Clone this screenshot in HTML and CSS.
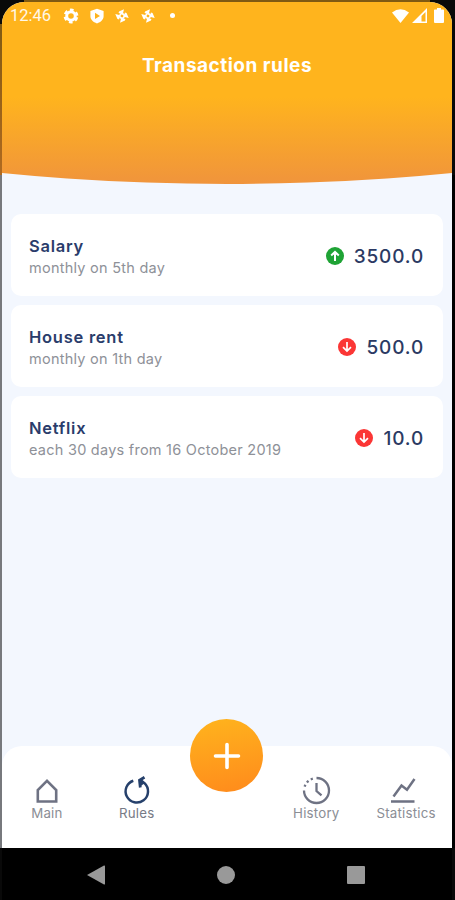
FILE: index.html
```html
<!DOCTYPE html>
<html lang="en">
<head>
    <meta charset="UTF-8">
    <meta name="viewport" content="width=device-width, initial-scale=1.0">
    <title>Transaction rules</title>
    <link rel="stylesheet" href="styles.css">
</head>
<body>
    <div class="phone">
        <div class="screen">
            <!-- Header -->
            <header class="header">
                <div class="status-bar">
                    <span class="time">12:46</span>
                    <div class="status-left">
                        <svg width="16" height="16" viewBox="0 0 16 16"><circle cx="8" cy="8" r="4.3" fill="none" stroke="#fff" stroke-width="3"/><circle cx="8" cy="8" r="6.2" fill="none" stroke="#fff" stroke-width="2.4" stroke-dasharray="3.7 2.793" stroke-dashoffset="-1.4"/></svg>
                        <svg width="16" height="16" viewBox="0 0 16 16"><path fill="#fff" fill-rule="evenodd" d="M8 .8 14.6 3v5.2c0 3.2-2.6 5.8-6.6 7.2C4 14 1.4 11.4 1.4 8.2V3zM6 4.8V11l5-3.1z"/></svg>
                        <svg width="16" height="16" viewBox="0 0 16 16"><g transform="rotate(14 8 8)"><path fill="#fff" d="M8.300 1v5H4V4.300zM15 8.300h-5V4h1.700zM7.700 15v-5H12v1.700zM1 7.700h5V12H4.300z"/><circle cx="8" cy="8" r="2.200" fill="none" stroke="#fff" stroke-width="1.600"/></g></svg>
                        <svg width="16" height="16" viewBox="0 0 16 16"><g transform="rotate(14 8 8)"><path fill="#fff" d="M8.300 1v5H4V4.300zM15 8.300h-5V4h1.700zM7.700 15v-5H12v1.700zM1 7.700h5V12H4.300z"/><circle cx="8" cy="8" r="2.200" fill="none" stroke="#fff" stroke-width="1.600"/></g></svg>
                        <span class="dot"></span>
                    </div>
                    <div class="status-right">
                        <svg width="17" height="14" viewBox="0 0 17 14"><path fill="#fff" d="M0 3.500Q8.500-3 17 3.500L8.500 14z"/></svg>
                        <svg width="15" height="15" viewBox="0 0 15 15"><path fill="#fff" fill-rule="evenodd" d="M0 15 15 0v15zM9.500 8v5.500h4V4z"/></svg>
                        <svg width="10" height="15" viewBox="0 0 10 15"><path fill="#fff" d="M3 0h4v1.500h2.200q.8 0 .8.800v11.700q0 1-1 1H1q-1 0-1-1V2.300q0-.8.800-.8H3z"/></svg>
                    </div>
                </div>
                <h1 class="title">Transaction rules</h1>
            </header>

            <!-- Rules -->
            <main class="rules">
                <div class="rule">
                    <div class="rule-info">
                        <h2 class="rule-name">Salary</h2>
                        <p class="rule-period">monthly on 5th day</p>
                    </div>
                    <svg class="arrow" width="18" height="18" viewBox="0 0 18 18"><circle cx="9" cy="9" r="9" fill="#1fa335"/><path d="M9 14V5.500M5.200 8.500 9 4.900l3.800 3.600" fill="none" stroke="#fff" stroke-width="2"/></svg>
                    <span class="amount">3500.0</span>
                </div>
                <div class="rule">
                    <div class="rule-info">
                        <h2 class="rule-name">House rent</h2>
                        <p class="rule-period">monthly on 1th day</p>
                    </div>
                    <svg class="arrow" width="18" height="18" viewBox="0 0 18 18"><circle cx="9" cy="9" r="9" fill="#fb3635"/><path d="M9 4v9M5 9.200l4 3.800 4-3.800" fill="none" stroke="#fff" stroke-width="1.700"/></svg>
                    <span class="amount">500.0</span>
                </div>
                <div class="rule">
                    <div class="rule-info">
                        <h2 class="rule-name">Netflix</h2>
                        <p class="rule-period">each 30 days from 16 October 2019</p>
                    </div>
                    <svg class="arrow" width="18" height="18" viewBox="0 0 18 18"><circle cx="9" cy="9" r="9" fill="#fb3635"/><path d="M9 4v9M5 9.200l4 3.800 4-3.800" fill="none" stroke="#fff" stroke-width="1.700"/></svg>
                    <span class="amount">10.0</span>
                </div>
            </main>

            <!-- Tabs -->
            <nav class="tabs">
                <a class="tab">
                    <svg width="28" height="28" viewBox="0 0 28 28"><path d="M4.800 25.500V14L14 4.800 23.200 14v11.500z" fill="none" stroke="#6e7283" stroke-width="2.600"/></svg>
                    <span>Main</span>
                </a>
                <a class="tab active">
                    <svg width="28" height="28" viewBox="0 0 28 28"><path d="M10.300 4.700A11.200 11.200 0 1 0 21.500 7.200L17.500 4" fill="none" stroke="#26406b" stroke-width="2.500"/><path d="M21.500 1.200 16.500 4.200l.8 7.300" fill="none" stroke="#26406b" stroke-width="2.800"/><path fill="#26406b" d="m16 3.500 5.500 3.800-4 3z"/></svg>
                    <span>Rules</span>
                </a>
                <span class="tab"></span>
                <a class="tab">
                    <svg width="28" height="28" viewBox="0 0 28 28"><path d="M14.500 2a12.500 12.500 0 1 1-12.500 12.500" fill="none" stroke="#6e7283" stroke-width="2.300"/><path d="M2.600 10.700A12.500 12.500 0 0 1 13 2.100" fill="none" stroke="#6e7283" stroke-width="2.300" stroke-dasharray="2.200 2.600"/><path d="M14.500 7v8l5 4.300" fill="none" stroke="#6e7283" stroke-width="2.300"/></svg>
                    <span>History</span>
                </a>
                <a class="tab">
                    <svg width="28" height="28" viewBox="0 0 28 28"><path d="M1.500 20.500 9.500 9.500l5.500 4.300L22.500 3M-1 25.500h23.500" fill="none" stroke="#6e7283" stroke-width="2.500" overflow="visible"/></svg>
                    <span>Statistics</span>
                </a>
                <button class="add-btn" aria-label="Add">
                    <svg width="28" height="28" viewBox="0 0 28 28"><path d="M14 2.500v23M2.500 14h23" stroke="#fff" stroke-width="3.600" stroke-linecap="round"/></svg>
                </button>
            </nav>
        </div>

        <!-- System buttons -->
        <div class="system-bar">
            <svg width="18" height="20" viewBox="0 0 18 20"><path fill="#999" d="M0 10 17 .5q1-.3 1 .8v17.400q0 1.100-1 .8z"/></svg>
            <svg width="18" height="18" viewBox="0 0 18 18"><circle cx="9" cy="9" r="9" fill="#999"/></svg>
            <svg width="18" height="18" viewBox="0 0 18 18"><rect width="18" height="18" rx="1" fill="#999"/></svg>
        </div>
    </div>
</body>
</html>
```
FILE: styles.css
```css
* {
    box-sizing: border-box;
    margin: 0;
    padding: 0;
}

body {
    background-color: #090909;
    font-family: Inter, sans-serif;
}

svg {
    display: block;
    flex-shrink: 0;
    overflow: visible;
}

.phone {
    width: 455px;
    height: 900px;
    padding: 2px 3px 0 2px;
    display: flex;
    flex-direction: column;
    overflow: hidden;
    background: linear-gradient(to right, #77797d 0, #77797d 2px, #000 2px) 0 175px / 100% 673px no-repeat,
        linear-gradient(#805a12, #805a12) 24px 0 / 406px 2px no-repeat,
        linear-gradient(#805a12, #b06a20) 0 24px / 2px 151px no-repeat;
}

.screen {
    height: 846px;
    display: flex;
    flex-direction: column;
    border-radius: 22px 22px 0 0;
    overflow: hidden;
    background-color: #f3f7fe;
}

/* Header */
.header {
    height: 182px;
    flex-shrink: 0;
    background: linear-gradient(#ffb41d 0, #ffb41d 52%, #f0943c 100%);
    clip-path: ellipse(820px 286px at 50% -104px);
}

.status-bar {
    height: 27px;
    padding: 0 8px;
    display: flex;
    align-items: center;
    color: #fff;
}

.time {
    width: 53px;
    font-family: Roboto, sans-serif;
    font-size: 16.5px;
    opacity: 0.9;
}

.status-left {
    display: flex;
    align-items: center;
    gap: 9.5px;
}

.dot {
    width: 5px;
    height: 5px;
    margin-left: 5px;
    border-radius: 50%;
    background-color: #fff;
}

.status-right {
    margin-left: auto;
    display: flex;
    align-items: center;
    gap: 3px;
}

.status-right svg:last-child {
    margin-left: 4px;
}

.title {
    margin-top: 25px;
    text-align: center;
    color: #fff;
    font-size: 19px;
    line-height: 24px;
    font-weight: 700;
    letter-spacing: 0.5px;
}

/* Rules */
.rules {
    flex: 1;
    padding: 30px 9px 0;
    display: flex;
    flex-direction: column;
    gap: 9px;
}

.rule {
    height: 82px;
    padding: 0 18px;
    display: flex;
    align-items: center;
    border-radius: 10px;
    background-color: #fff;
}

.rule-info {
    flex: 1;
    padding-top: 3px;
}

.rule-name {
    color: #2a3c6b;
    font-size: 16.5px;
    line-height: 22px;
    font-weight: 600;
    letter-spacing: 0.75px;
}

.rule-period {
    color: #8e9198;
    font-size: 14.5px;
    line-height: 22px;
    letter-spacing: 0.25px;
}

.arrow {
    margin-top: 1px;
}

.amount {
    margin: 4px 1px 0 10px;
    color: #2b3a63;
    font-size: 19px;
    line-height: 24px;
    font-weight: 500;
    letter-spacing: 0.85px;
}

/* Tabs */
.tabs {
    position: relative;
    height: 102px;
    padding-right: 1px;
    display: flex;
    border-radius: 20px 20px 0 0;
    background-color: #fff;
}

.tab {
    flex: 1;
    padding-top: 30px;
    display: flex;
    flex-direction: column;
    align-items: center;
    color: #8b8e95;
    font-size: 13.3px;
    line-height: 18px;
    letter-spacing: 0.2px;
}

.tab.active {
    color: #777b86;
}

.add-btn {
    position: absolute;
    left: 188px;
    top: -27px;
    width: 73px;
    height: 73px;
    display: flex;
    align-items: center;
    justify-content: center;
    border: 0;
    border-radius: 50%;
    background: linear-gradient(170deg, #ffb41d, #ff8a1c);
}

/* System buttons */
.system-bar {
    height: 52px;
    padding: 2px 87px 0 85px;
    display: flex;
    align-items: center;
    justify-content: space-between;
    background-color: #000;
}
```
